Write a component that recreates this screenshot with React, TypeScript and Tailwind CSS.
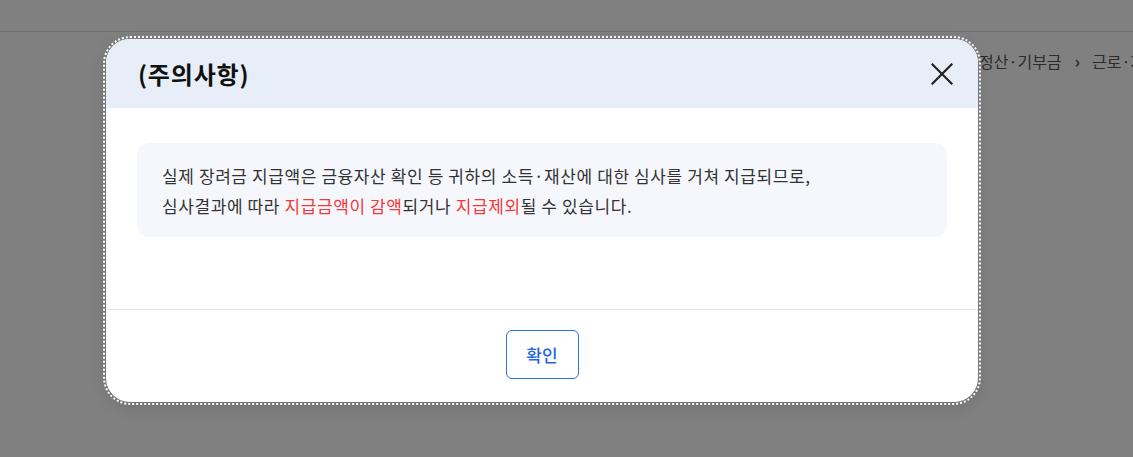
import React from "react";

export default function App() {
  return (
    <div
      className="relative h-[457px] w-[1133px] overflow-hidden bg-[#808080]"
      style={{ fontFamily: '"Noto Sans CJK KR", "Noto Sans", sans-serif' }}
    >
      <div className="h-[32px] border-b border-[#707070]" />
      <div className="flex items-center whitespace-nowrap pl-[979px] pt-[14px] text-[16px] leading-[30px] text-[#2c2c2c]">
        <span>정산·기부금</span>
        <span className="ml-[13px] mr-[12px] text-[17px] font-bold">›</span>
        <span>근로·자녀</span>
      </div>

      <div className="absolute left-[106px] top-[39px] flex h-[363px] w-[872px] flex-col overflow-hidden rounded-[24px] bg-white shadow-[0_4px_16px_rgba(0,0,0,0.15)] outline-2 outline-offset-1 outline-white outline-dotted">
        <div className="flex h-[69px] shrink-0 items-center justify-between bg-[#e8eef8] pl-[32px] pr-[24px]">
          <h2 className="text-[24px] font-bold tracking-[0.8px] text-[#111]">(주의사항)</h2>
          <button className="flex h-[24px] w-[24px] items-center justify-center" aria-label="닫기">
            <svg width="22" height="22" viewBox="0 0 22 22" fill="none" stroke="#222" strokeWidth="2.2" strokeLinecap="square">
              <path d="M1.5 1.5 L20.5 20.5 M20.5 1.5 L1.5 20.5" />
            </svg>
          </button>
        </div>

        <div className="flex-1 px-[31px] pt-[35px]">
          <div className="rounded-[12px] bg-[#f6f7fc] pb-[17px] pl-[25px] pr-[20px] pt-[18px] text-[17px] leading-[29.5px] tracking-[0.6px] text-[#333]">
            <p className="whitespace-nowrap">실제 장려금 지급액은 금융자산 확인 등 귀하의 소득·재산에 대한 심사를 거쳐 지급되므로,</p>
            <p className="whitespace-nowrap">
              심사결과에 따라 <span className="text-[#f23a3a]">지급금액이 감액</span>되거나{" "}
              <span className="text-[#f23a3a]">지급제외</span>될 수 있습니다.
            </p>
          </div>
        </div>

        <div className="flex h-[93px] shrink-0 items-center justify-center border-t border-[#e6e8ef] pb-[3px]">
          <button className="h-[49px] w-[73px] rounded-[6px] border border-[#2f6fe8] bg-white text-[17px] font-medium text-[#1f66e0]">
            확인
          </button>
        </div>
      </div>
    </div>
  );
}
